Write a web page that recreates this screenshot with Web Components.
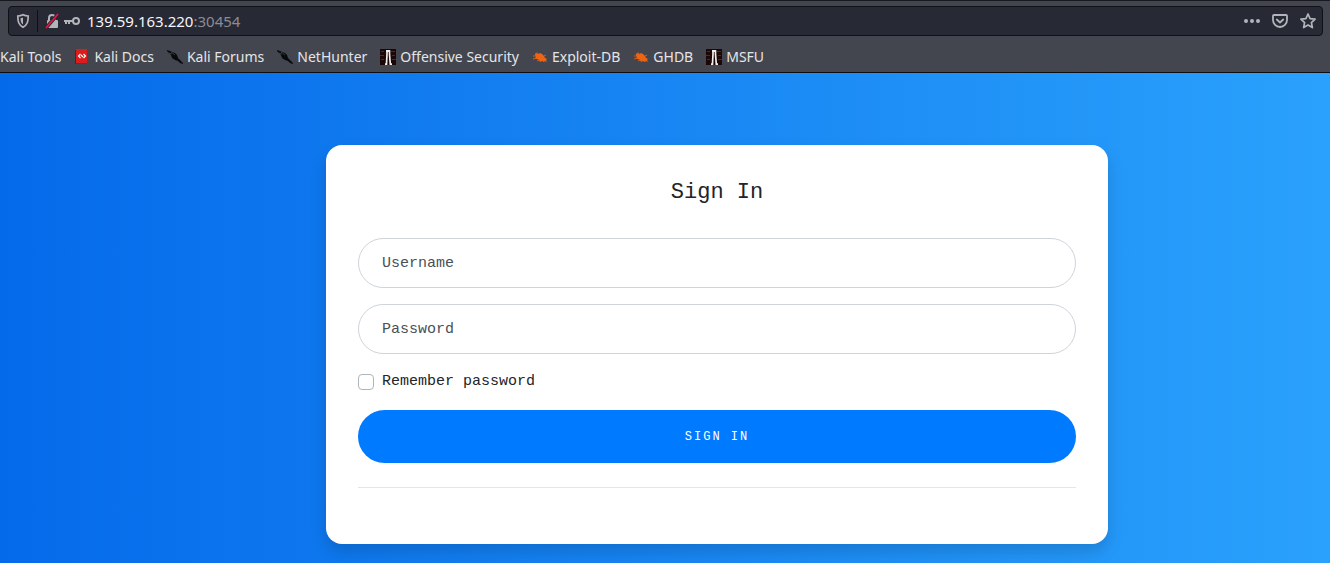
<!DOCTYPE html>
<html lang="en">
<head>
<meta charset="utf-8">
<title>Sign In</title>
<style>
  html, body { margin: 0; min-height: 100%; }
  body { min-height: 100vh; display: flex; flex-direction: column; font-family: "Noto Sans", sans-serif; }
  sign-in-page { flex: 1; }
</style>
</head>
<body>
<browser-bar>
  <address-bar></address-bar>
  <bookmark-bar>
    <bookmark-link>Kali Tools</bookmark-link>
    <bookmark-link icon="docs">Kali Docs</bookmark-link>
    <bookmark-link icon="dragon">Kali Forums</bookmark-link>
    <bookmark-link icon="dragon">NetHunter</bookmark-link>
    <bookmark-link icon="tower">Offensive Security</bookmark-link>
    <bookmark-link icon="bug">Exploit-DB</bookmark-link>
    <bookmark-link icon="bug">GHDB</bookmark-link>
    <bookmark-link icon="tower">MSFU</bookmark-link>
  </bookmark-bar>
</browser-bar>
<sign-in-page>
  <sign-in-card>Sign In</sign-in-card>
</sign-in-page>

<script>
const icons = {
  docs: `<svg viewBox="0 0 16 16"><path fill="#1d2f66" d="M1 1h3v14H1z"/><path fill="#dc1c1c" d="M2 0h11v14H2z"/><path fill="#1d2f66" d="M1 1h1v14H1z"/><path fill="#a8141c" d="M2 14h11v1H2z"/><path fill="none" stroke="#fff" stroke-width="1.200" d="M6.500 5 4.500 7l2 2M9.500 5l2 2-2 2M7 6l2 2"/></svg>`,
  dragon: `<svg viewBox="0 0 16 16"><path fill="#08090b" d="M0 1l3 1 2 1 3 1 2 2 1 3 2 2 3 3v1l-3-1-2-2-3-1-3-2-1-3-2-2-2-2z"/><path fill="none" stroke="#555961" stroke-width=".6" d="M2 4l3 1M4 3l4 3"/></svg>`,
  tower: `<svg viewBox="0 0 16 16"><path fill="#1c0708" d="M0 0h16v16H0z"/><path stroke="#6b2a2d" d="M1 2.500h3M11 2.500h4M0 6.500h4M12 6.500h3M1 10.500h3M12 10.500h4" opacity=".8"/><path fill="none" stroke="#f0eeea" stroke-width="1.700" d="M5 15.200h1.500L7 5V2h2.500v3l.8 10.200H12"/><path fill="#f0eeea" d="M6 1h4v2H6z"/></svg>`,
  bug: `<svg viewBox="0 0 16 16"><path fill="#ed6412" d="M3 4l1 1 1-2 1 2 2-1 2 1 2 2 1 2 2 1-1 1 1 2-2-1-1 1-2-1-2 1-1-2-2-1-2-1 1-1-1-2z"/><path fill="none" stroke="#ed6412" stroke-width=".8" d="M1 7h4M1 10l4-1M5 12l2-1M12 7l2-1"/></svg>`
};

function define(name, html, setup) {
  const template = document.createElement('template');
  template.innerHTML = html;
  customElements.define(name, class extends HTMLElement {
    constructor() {
      super();
      this.attachShadow({ mode: 'open' }).append(template.content.cloneNode(true));
    }
    connectedCallback() { if (setup) setup(this, this.shadowRoot); }
  });
}

define('browser-bar', `
  <style>
    :host { display: block; background: #43464e; border-top: 1px solid #181920; border-bottom: 1px solid #0d0e12; padding: 5px 7px 5px 8px; }
  </style>
  <slot></slot>`);

define('address-bar', `
  <style>
    :host { display: flex; align-items: center; box-sizing: border-box; height: 30px; padding: 0 6px; background: #272935; border: 1px solid #101116; border-radius: 4px; color: #8b8c93; font-size: 15px; line-height: 20px; }
    button { display: flex; padding: 0; border: 0; background: none; color: #b3b4b9; }
    svg { width: 16px; height: 16px; display: block; }
    .divider { width: 1px; height: 22px; margin: 0 6px; background: #0e0f14; }
    .key { margin: 0 7px 0 4px; }
    .address { flex: 1; }
    b { font-weight: 400; color: #f6f6f8; }
    .actions { display: flex; gap: 12px; }
  </style>
  <button aria-label="Tracking protection"><svg viewBox="0 0 16 16" fill="none" stroke="currentColor" stroke-width="1.700"><path d="M8 1.800C6 2.800 4.500 3 2.800 3c0 5.500.7 8.800 5.200 11.200C12.500 11.800 13.200 8.500 13.200 3 11.500 3 10 2.800 8 1.800z"/><path d="M8 4.500v7C5.800 10 5.600 8 5.500 5.300 6.500 5.200 7.300 5 8 4.500z" fill="currentColor" stroke="none"/></svg></button>
  <span class="divider"></span>
  <button aria-label="Connection is not secure"><svg viewBox="0 0 16 16"><path fill="none" stroke="currentColor" stroke-width="2" d="M5 8V5a3 3 0 0 1 6 0v3"/><rect x="3" y="7" width="11" height="8" rx="1" fill="currentColor"/><path stroke="#272935" stroke-width="3.500" d="M2 15 14 1"/><path stroke="#f01446" stroke-width="1.700" d="M2 15 14 1"/></svg></button>
  <button class="key" aria-label="Saved logins"><svg viewBox="0 0 16 16" fill="none" stroke="currentColor" stroke-width="2"><circle cx="12" cy="8" r="3"/><path d="M9 8H0M2 8v3M5 8v3"/></svg></button>
  <span class="address"><b>139.59.163.220</b>:30454</span>
  <div class="actions">
    <button aria-label="Page actions"><svg viewBox="0 0 16 16" fill="currentColor"><circle cx="2" cy="8" r="2"/><circle cx="8" cy="8" r="2"/><circle cx="14" cy="8" r="2"/></svg></button>
    <button aria-label="Save to Pocket"><svg viewBox="0 0 16 16" fill="none" stroke="currentColor" stroke-width="1.800" stroke-linecap="round" stroke-linejoin="round"><path d="M2 2h12q1 0 1 1v4a7 7 0 0 1-14 0V3q0-1 1-1z"/><path d="M4.800 6.500 8 9.500l3.200-3"/></svg></button>
    <button aria-label="Bookmark this page"><svg viewBox="0 0 16 16" fill="none" stroke="currentColor" stroke-width="1.700" stroke-linejoin="round"><path d="m8 1 2.100 4.600 5 .6-3.700 3.400 1 5L8 12.100l-4.400 2.500 1-5L.9 6.200l5-.6z"/></svg></button>
  </div>`);

define('bookmark-bar', `
  <style>
    :host { display: flex; align-items: center; gap: 13px; height: 20px; margin: 11px 0 0 -8px; white-space: nowrap; }
  </style>
  <slot></slot>`);

define('bookmark-link', `
  <style>
    :host { display: block; }
    a { display: flex; align-items: center; gap: 4px; color: #e4e5e8; font-size: 14px; line-height: 20px; text-decoration: none; }
    .icon { display: contents; }
    svg { width: 16px; height: 16px; }
  </style>
  <a href="#"><span class="icon"></span><span><slot></slot></span></a>`,
  (host, root) => {
    const icon = root.querySelector('.icon');
    if (icons[host.getAttribute('icon')]) icon.innerHTML = icons[host.getAttribute('icon')];
    else icon.remove();
  });

define('sign-in-page', `
  <style>
    :host { display: block; box-sizing: border-box; padding: 72px 0 19px 104px; background: linear-gradient(to right, #056aea, #2aa1fc); }
    main { max-width: 782px; margin: 0 auto; }
  </style>
  <main><slot></slot></main>`);

define('sign-in-card', `
  <style>
    :host { display: block; padding: 32px 32px 56px; background: #fff; border-radius: 16px; box-shadow: 0 8px 16px rgba(0, 0, 0, .15); color: #212529; font: 15px/24px "Liberation Mono", monospace; }
    h1 { margin: 0 0 30px; font-size: 22px; line-height: 31px; font-weight: 400; text-align: center; }
    form { display: flex; flex-direction: column; gap: 16px; }
    input, button { font: inherit; box-sizing: border-box; }
    .field { display: block; width: 100%; height: 50px; padding: 0 23px; border: 1px solid #ced4da; border-radius: 32px; background: #fff; color: #495057; }
    .field::placeholder { color: #495057; opacity: 1; }
    .remember { display: flex; align-items: center; gap: 8px; }
    .remember input { appearance: none; width: 16px; height: 16px; margin: 0; border: 1px solid #adb5bd; border-radius: 4px; background: #fff; }
    .remember input:checked { background: #007bff; }
    button { height: 53px; border: 0; border-radius: 32px; background: #007bff; color: #fff; font-size: 12px; letter-spacing: 2px; text-transform: uppercase; }
    hr { width: 100%; height: 1px; margin: 8px 0 0; border: 0; background: #e5e5e5; }
  </style>
  <h1><slot></slot></h1>
  <form>
    <input class="field" type="text" placeholder="Username" aria-label="Username">
    <input class="field" type="password" placeholder="Password" aria-label="Password">
    <div class="remember"><input type="checkbox" id="remember"><label for="remember">Remember password</label></div>
    <button type="submit">Sign in</button>
    <hr>
  </form>`);
</script>
</body>
</html>
